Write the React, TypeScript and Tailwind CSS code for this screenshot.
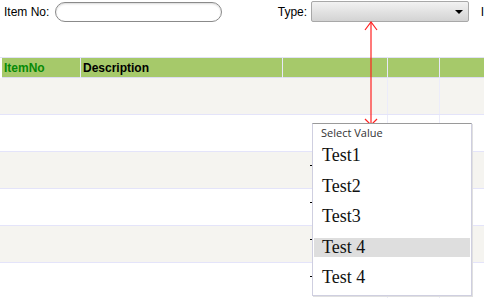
const rows = [0, 1, 2, 3, 4, 5];
const options = ['Test1', 'Test2', 'Test3', 'Test 4', 'Test 4'];
const dots = [165, 202, 239, 276];

const App = () => {
  return (
    <div className="relative w-[484px] h-[298px] overflow-hidden bg-white font-['Liberation_Sans',Arial,sans-serif] text-[12px] text-black">
      {/* Filter bar */}
      <div className="flex items-center h-[22px] pt-px">
        <span className="ml-[4px] w-[51px]">Item No:</span>
        <div className="w-[168px] h-[20px] rounded-full border border-[#8a8a8a] bg-white shadow-[inset_0_1px_2px_rgba(0,0,0,0.15)]" />
        <span className="ml-[56px] w-[33px]">Type:</span>
        <div className="flex items-center justify-end w-[159px] h-[21px] rounded-[2px] border border-[#a8a8a8] bg-gradient-to-b from-[#f2f2f2] to-[#d3d3d3] pr-[5px]">
          <span className="w-0 h-0 border-l-[4px] border-r-[4px] border-t-[4px] border-l-transparent border-r-transparent border-t-black" />
        </div>
        <span className="ml-[12px]">I</span>
      </div>

      {/* Grid */}
      <div className="mt-[35px] border-t border-[#e2e2f6]">
        <div className="grid grid-cols-[79px_202px_105px_52px_1fr] h-[20px] bg-[#a6c96a] ml-[2px] font-bold border-b border-[#dcdcf0]">
          <div className="pl-[2px] leading-[20px] text-[#078a07] border-r border-[#e8e8f8]">ItemNo</div>
          <div className="pl-[2px] leading-[20px] border-r border-[#e8e8f8]">Description</div>
          <div className="border-r border-[#e8e8f8]" />
          <div className="border-r border-[#e8e8f8]" />
          <div />
        </div>
        {rows.map((r) => (
          <div
            key={r}
            className={`grid grid-cols-[388px_52px_1fr] h-[37px] border-b border-[#e4e4fa] ${r % 2 === 0 ? 'bg-[#f5f4f0]' : 'bg-white'}`}
          >
            <div className="border-r border-[#ececfa]" />
            <div className="border-r border-[#ececfa]" />
            <div />
          </div>
        ))}
      </div>

      {/* stray dots left of the list */}
      {dots.map((y) => (
        <div key={y} className="absolute left-[310px] w-[2px] h-px bg-black" style={{ top: y }} />
      ))}

      {/* Annotation arrow */}
      <svg className="absolute left-[364px] top-[20px]" width="14" height="108" viewBox="0 0 14 108">
        <line x1="7" y1="2" x2="7" y2="105" stroke="#ff2020" strokeWidth="1.2" />
        <polyline points="1,10 7,2 13,10" fill="none" stroke="#ff2020" strokeWidth="1.2" />
        <polyline points="1,99 7,105 13,99" fill="none" stroke="#ff2020" strokeWidth="1.2" />
      </svg>

      {/* Dropdown list */}
      <div className="absolute left-[312px] top-[123px] w-[160px] h-[173px] bg-white border border-[#cfcfe0] border-t-[#9a9a9a] shadow-[1px_1px_0_#e0e0e0]">
        <div className="pl-[8px] pt-[2px] h-[22px] text-[11px] leading-[14px] text-[#333] font-['Open_Sans',sans-serif]">Select Value</div>
        <div className="px-px">
          {options.map((o, i) => (
            <div key={i} className="h-[30.5px]">
              <div
                className={`h-[19px] pl-[8px] text-[18px] leading-[19px] font-['Liberation_Serif','Times_New_Roman',serif] text-[#111] ${i === 3 ? 'bg-[#dedede]' : ''}`}
              >
                {o}
              </div>
            </div>
          ))}
        </div>
      </div>
    </div>
  );
};

export default App;
